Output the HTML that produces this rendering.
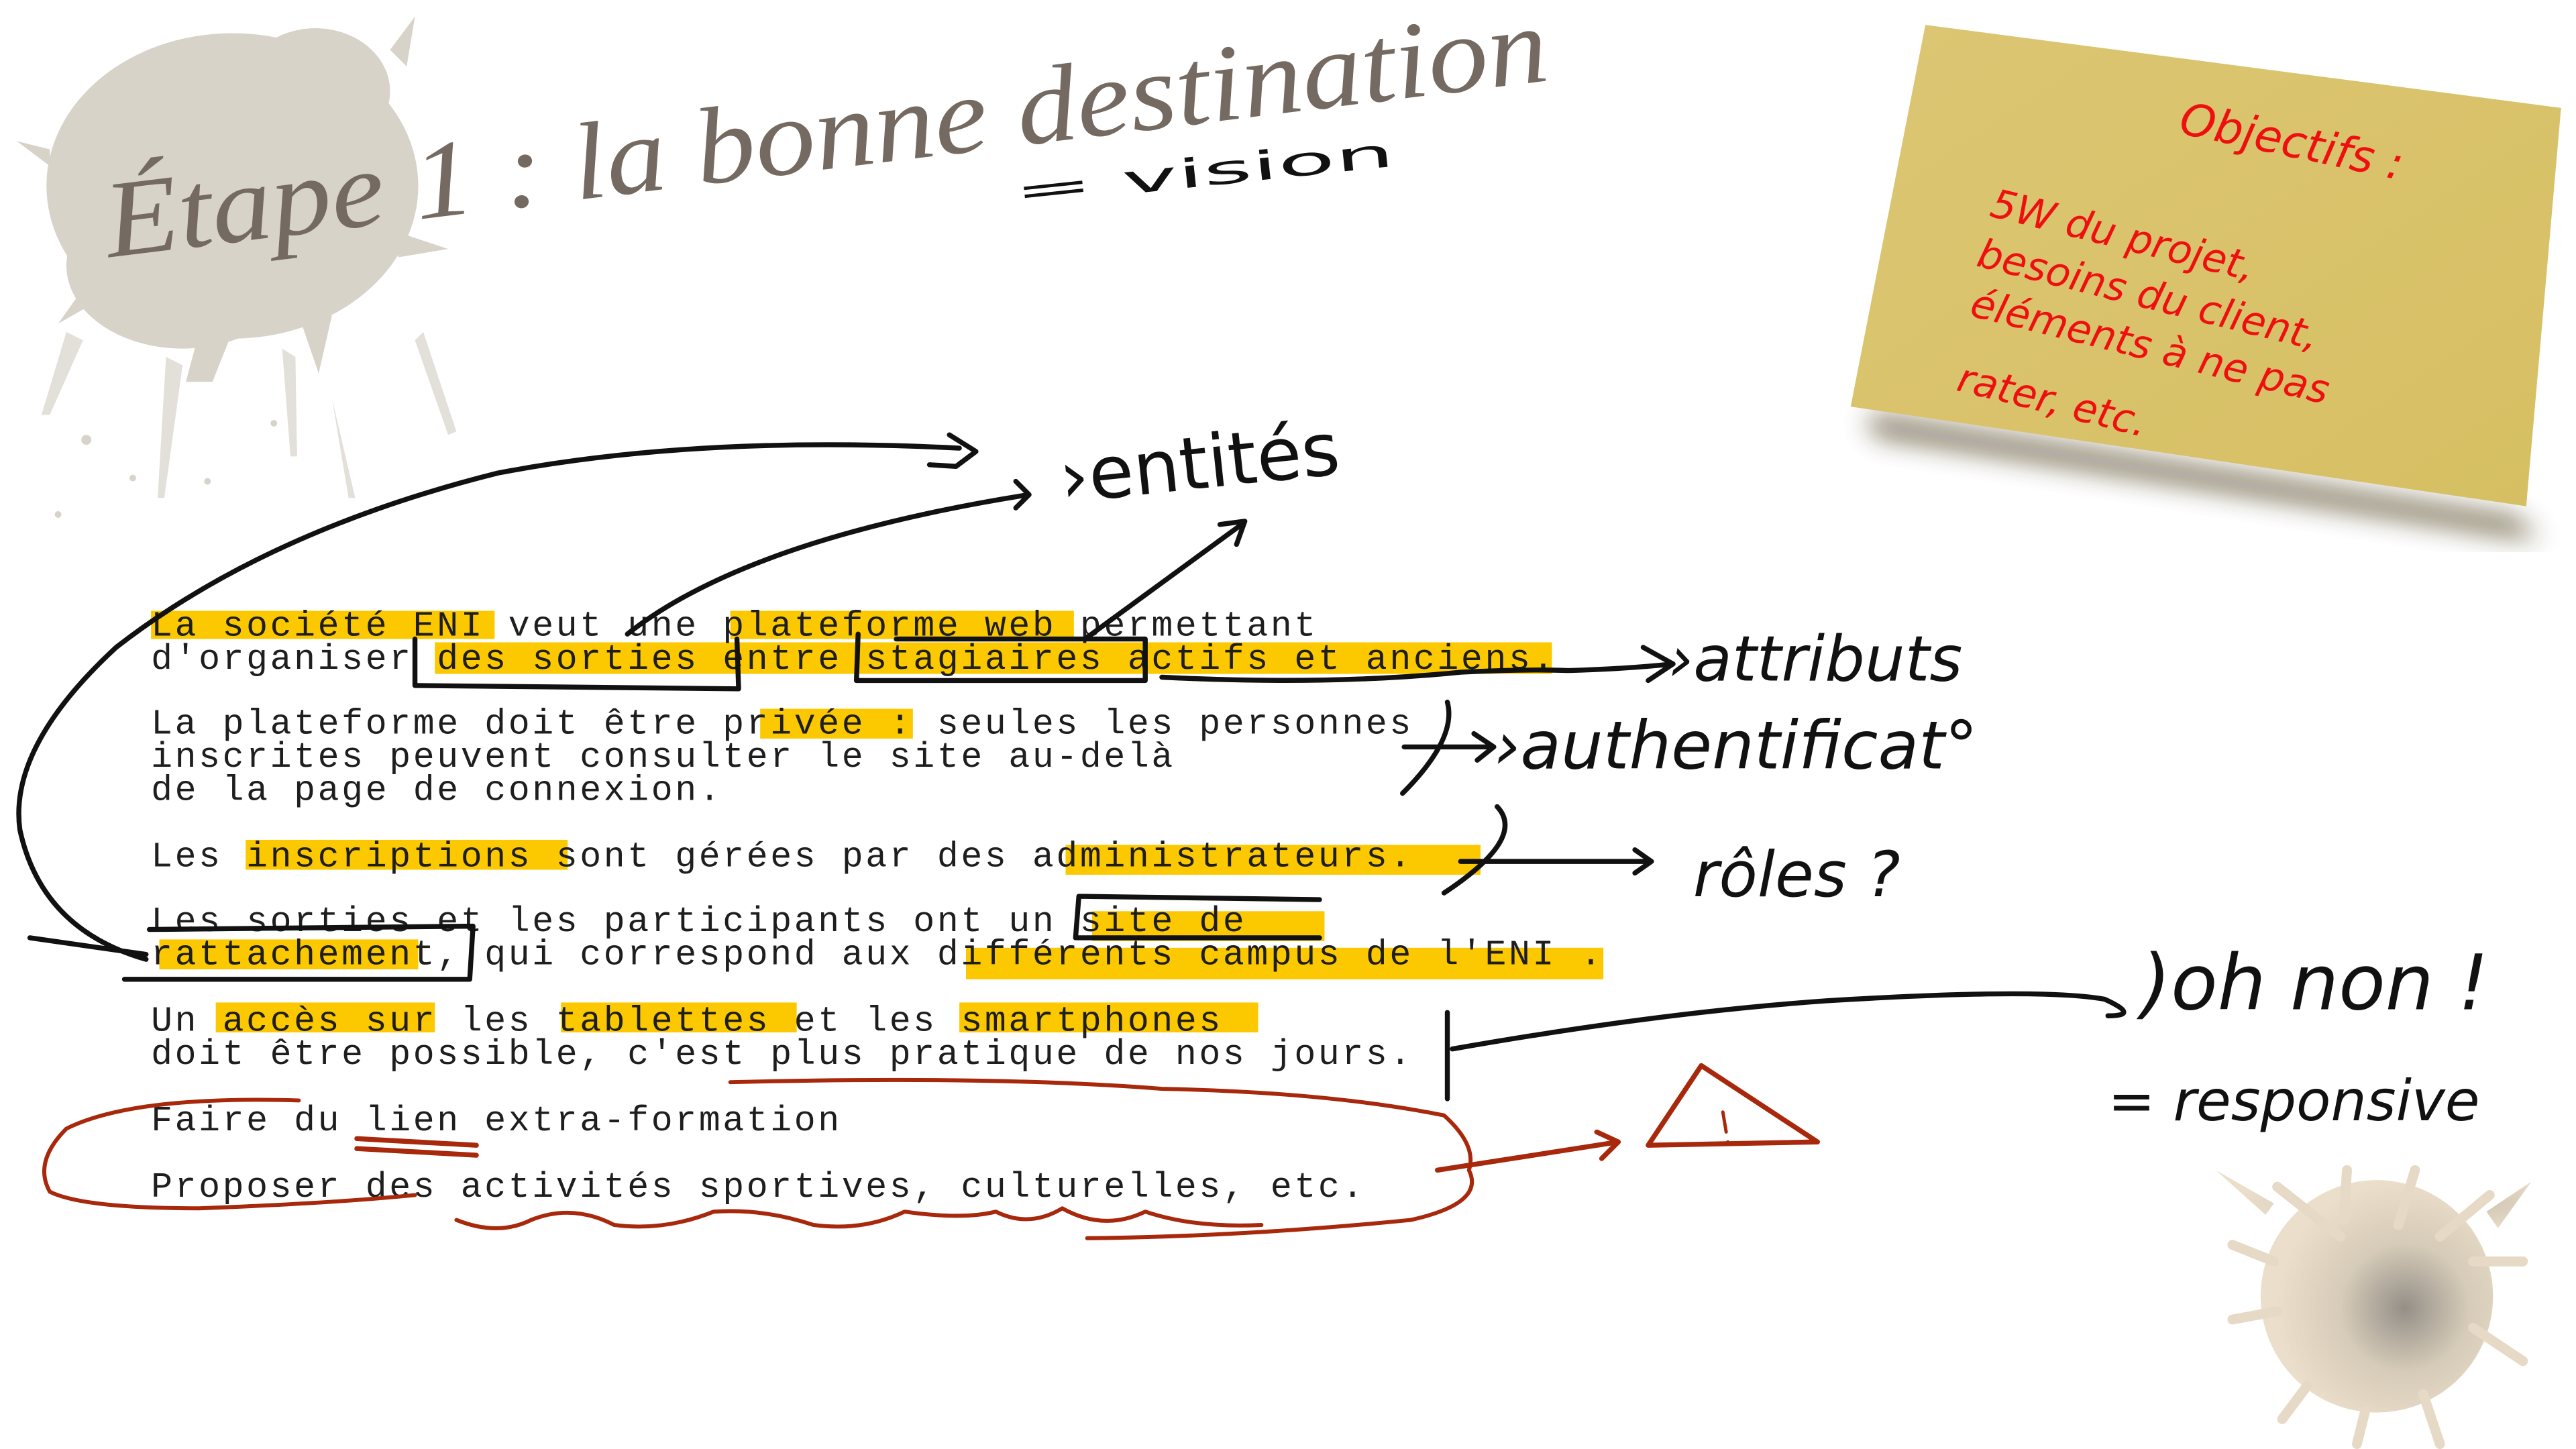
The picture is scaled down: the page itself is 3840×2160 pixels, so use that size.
<!DOCTYPE html>
<html><head><meta charset="utf-8"><style>
html,body{margin:0;padding:0;background:#fff;width:3840px;height:2160px;overflow:hidden}
svg{display:block}
.m{font-family:"Liberation Mono",monospace;font-size:21.5px;fill:#1e1e1e;letter-spacing:1.45px}
.h{font-family:"DejaVu Sans","Liberation Sans",sans-serif;fill:#111}
.k{fill:none;stroke:#111;stroke-width:3;stroke-linecap:round;stroke-linejoin:round}
.r{fill:none;stroke:#a8280c;stroke-width:2.4;stroke-linecap:round;stroke-linejoin:round}
</style></head><body>
<svg width="3840" height="2160" viewBox="0 0 1552 873" xmlns="http://www.w3.org/2000/svg">
<defs>
<radialGradient id="sp" cx="0.62" cy="0.55" r="0.55">
<stop offset="0" stop-color="#948f88"/><stop offset="0.5" stop-color="#d6cbb8"/><stop offset="1" stop-color="#ebdfcb"/></radialGradient>
<linearGradient id="note" x1="0" y1="0" x2="1" y2="1"><stop offset="0" stop-color="#dcc674"/><stop offset="1" stop-color="#d6bf62"/></linearGradient>
<filter id="bl"><feGaussianBlur stdDeviation="8"/></filter>
</defs>
<g fill="#d7d3c9">
<ellipse cx="140" cy="112" rx="112" ry="92"/>
<ellipse cx="110" cy="160" rx="70" ry="50"/>
<ellipse cx="190" cy="55" rx="45" ry="38"/>
<path d="M120 200 L112 230 L128 230 L140 200Z M180 190 L192 225 L200 190Z M60 160 L35 195 L70 175Z M235 30 L250 10 L245 40Z M240 140 L270 150 L240 155Z M30 90 L10 85 L30 100Z"/>
<path d="M100 215 L95 300 L99 300 L110 220Z M170 210 L175 275 L179 275 L178 215Z M255 200 L275 260 L270 262 L250 205Z M40 200 L25 250 L30 250 L50 205Z M200 240 L210 300 L214 300Z" opacity="0.7"/>
<circle cx="52" cy="265" r="3"/><circle cx="80" cy="288" r="2"/><circle cx="125" cy="290" r="2"/><circle cx="35" cy="310" r="2"/><circle cx="165" cy="255" r="2"/>
</g>
<text transform="translate(66,155) rotate(-7)" font-family="Liberation Serif,serif" font-style="italic" font-size="66" fill="#746a62" textLength="875" lengthAdjust="spacingAndGlyphs">Étape 1 : la bonne destination</text>
<text class="h" transform="translate(612,124) rotate(-6)" font-size="24" textLength="230" lengthAdjust="spacingAndGlyphs">= vision</text>
<polygon points="1125,250 1515,312 1530,325 1130,262" fill="#3a2c08" filter="url(#bl)" opacity="0.75"/>
<polygon points="1160,15 1543,65 1522,305 1115,245" fill="url(#note)"/>
<g fill="#ee1010" font-family="DejaVu Sans,sans-serif" font-style="italic">
<text transform="translate(1312,80) rotate(12)" font-size="27">Objectifs :</text>
<g font-size="24">
<text transform="translate(1198,130) rotate(14)">5W du projet,</text>
<text transform="translate(1190,160) rotate(14)">besoins du client,</text>
<text transform="translate(1186,190) rotate(14)">éléments à ne pas</text>
<text transform="translate(1178,235) rotate(14)">rater, etc.</text>
</g></g>
<g fill="url(#sp)">
<circle cx="1432" cy="781" r="70"/>
<g stroke="#e6dac6" stroke-width="6" stroke-linecap="round">
<path d="M1372 715 L1410 745 M1412 735 L1414 705 M1445 738 L1455 705 M1470 745 L1500 720 M1490 760 L1520 760 M1490 800 L1520 820 M1460 840 L1470 870 M1425 850 L1420 870 M1390 835 L1375 855 M1372 790 L1345 795 M1370 760 L1345 750"/>
</g>
<path d="M1335 705 L1370 725 L1365 732Z M1498 730 L1525 712 L1505 740Z" />
</g>
<g fill="#fcc800">
<rect x="91" y="368" width="207" height="17"/><rect x="440" y="368" width="207" height="17"/>
<rect x="262" y="387" width="673" height="19"/>
<rect x="458" y="427" width="92" height="18"/>
<rect x="148" y="506" width="194" height="18"/><rect x="642" y="509" width="250" height="18"/>
<rect x="658" y="549" width="140" height="18"/><rect x="96" y="566" width="156" height="18"/><rect x="582" y="571" width="384" height="19"/>
<rect x="130" y="604" width="132" height="18"/><rect x="338" y="604" width="142" height="18"/><rect x="578" y="604" width="180" height="18"/>
</g>
<g class="m">
<text x="91" y="383">La société ENI veut une plateforme web permettant</text>
<text x="91" y="403">d'organiser des sorties entre stagiaires actifs et anciens.</text>
<text x="91" y="442">La plateforme doit être privée : seules les personnes</text>
<text x="91" y="462">inscrites peuvent consulter le site au-delà</text>
<text x="91" y="482">de la page de connexion.</text>
<text x="91" y="522">Les inscriptions sont gérées par des administrateurs.</text>
<text x="91" y="561">Les sorties et les participants ont un site de</text>
<text x="91" y="581">rattachement, qui correspond aux différents campus de l'ENI .</text>
<text x="91" y="621">Un accès sur les tablettes et les smartphones</text>
<text x="91" y="641">doit être possible, c'est plus pratique de nos jours.</text>
<text x="91" y="681">Faire du lien extra-formation</text>
<text x="91" y="721">Proposer des activités sportives, culturelles, etc.</text>
</g>
<g class="k">
<path d="M578 270 Q420 262 300 285 Q160 320 70 390 Q5 450 12 500 Q25 560 88 578"/>
<path d="M572 262 L588 272 L576 281 L560 280"/>
<path d="M378 382 Q450 325 620 298 L612 290 M620 298 L612 306"/>
<path d="M655 384 L748 316 M735 316 L750 314 L745 328"/>
<path d="M250 385 L250 413 L445 415 L444 385" />
<path d="M517 382 L516 410 L690 410 L690 385 L540 385"/>
<path d="M700 408 Q800 413 880 405 Q920 403 945 404 Q980 403 1008 400 L990 390 M1008 400 L993 410"/>
<path d="M872 423 Q878 445 845 478 M846 450 L900 450 L888 442 M900 450 L890 458"/>
<path d="M902 486 Q920 505 870 538 M880 519 L995 519 L985 512 M995 519 L985 526"/>
<path d="M650 540 L648 565 L795 565 M650 540 L795 542"/>
<path d="M90 560 L285 558 L283 590 L75 590 M18 565 L88 575"/>
<path d="M872 610 L872 662 M875 632 Q1000 610 1100 603 Q1230 595 1268 602 Q1290 612 1270 612"/>
</g>
<g class="h">
<text transform="translate(640,303) rotate(-6)" font-size="44">›entités</text>
<text x="1005" y="410" font-size="38" font-style="italic">›attributs</text>
<text x="900" y="463" font-size="40" font-style="italic">›authentificat°</text>
<text x="1020" y="540" font-size="38" font-style="italic">rôles ?</text>
<text x="1290" y="608" font-size="46" font-style="italic">)oh non !</text>
<text x="1270" y="675" font-size="34" font-style="italic">= responsive</text>
</g>
<g class="r">
<path d="M180 663 Q80 660 40 680 Q20 700 30 718 Q50 728 120 728 Q200 725 250 720"/>
<path d="M440 652 Q600 648 700 656 Q800 658 870 672 Q890 690 885 705 Q895 725 850 735 Q750 745 655 746"/>
<path d="M215 686 L287 690 M215 692 L287 696" stroke-width="3"/>
<path d="M275 735 Q300 745 320 735 Q345 725 370 738 Q400 742 430 730 Q460 728 490 738 Q520 742 545 730 Q580 735 600 730 Q620 740 640 728 Q665 742 690 730 Q720 740 760 738"/>
<path d="M866 705 L975 688 L962 682 M975 688 L965 698" stroke-width="3"/>
<path d="M1025 642 L993 690 L1095 688 Z" stroke-width="3"/>
<path d="M1038 670 L1040 682 M1041 688 L1041 689" stroke-width="2"/>
</g>
</svg>
</body></html>
